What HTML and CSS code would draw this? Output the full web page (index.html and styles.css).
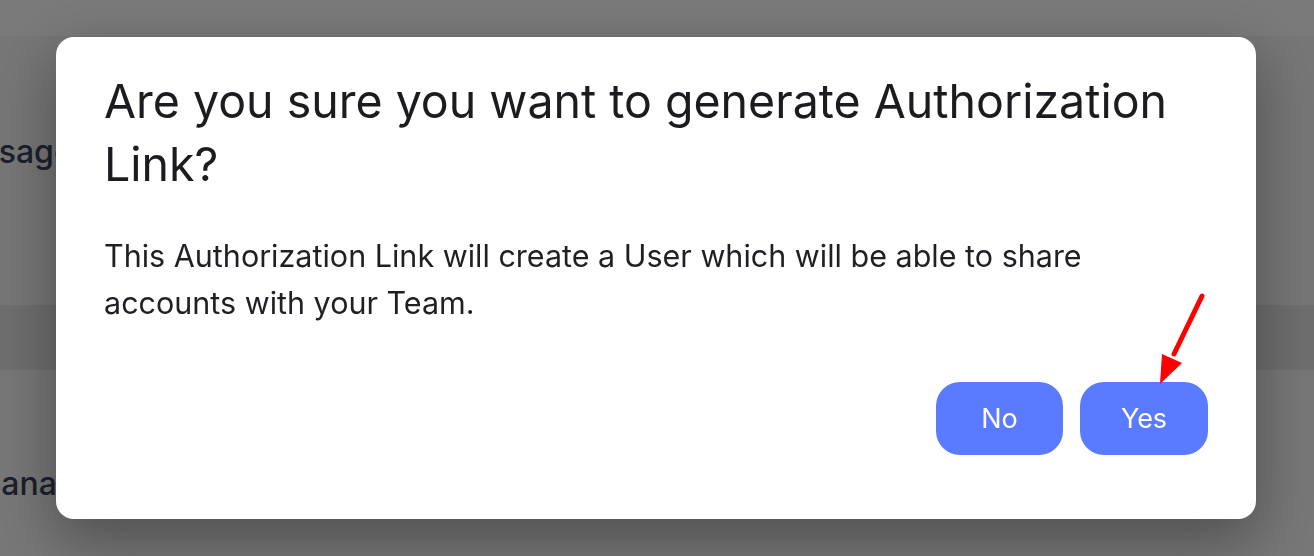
FILE: index.html
```html
<!DOCTYPE html>
<html lang="en">
<head>
<meta charset="utf-8">
<title>Generate Authorization Link</title>
<link rel="stylesheet" href="styles.css">
</head>
<body>
<div class="page">
  <div class="topbar"></div>
  <div class="section section-a">
    <div class="bg-label label-a">Usage</div>
  </div>
  <div class="band"></div>
  <div class="section section-b">
    <div class="bg-label label-b">Manage</div>
  </div>
</div>

<div class="overlay">
  <div class="modal" role="dialog" aria-modal="true">
    <h2 class="modal-title">Are you sure you want to generate Authorization Link?</h2>
    <p class="modal-text">This Authorization Link will create a User which will be able to share accounts with your Team.</p>
    <div class="modal-actions">
      <button class="btn">No</button>
      <button class="btn btn-yes">Yes
        <svg class="arrow" width="60" height="100" viewBox="0 0 60 100" aria-hidden="true">
          <line x1="52" y1="6" x2="24" y2="64" stroke="#ff0000" stroke-width="5" stroke-linecap="round"/>
          <polygon points="10,94 12,64 32,73" fill="#ff0000"/>
        </svg>
      </button>
    </div>
  </div>
</div>
</body>
</html>
```

FILE: styles.css
```css
* { box-sizing: border-box; }

html, body {
  margin: 0;
  padding: 0;
  height: 100%;
}

body {
  font-family: Inter, "Noto Sans", "Liberation Sans", sans-serif;
  background: #f0f0f0;
  overflow: hidden;
}

.page {
  display: flex;
  flex-direction: column;
  height: 556px;
}

.topbar {
  height: 36px;
  background: #f4f4f4;
}

.section {
  display: flex;
  flex-direction: column;
}

.section-a {
  height: 269px;
  background: #ececec;
  padding-top: 96px;
}

.band {
  height: 65px;
  background: #dcdcdc;
}

.section-b {
  flex: 1;
  background: #eeeeee;
  padding-top: 94px;
}

.bg-label {
  font-size: 32px;
  line-height: 40px;
  color: #38405a;
  font-weight: 500;
  white-space: nowrap;
}

.label-a { margin-left: -25px; }
.label-b { margin-left: -28px; }

.overlay {
  position: fixed;
  inset: 0;
  background: rgba(0, 0, 0, 0.5);
  display: flex;
  justify-content: center;
  align-items: flex-start;
  padding-top: 37px;
  padding-right: 2px;
}

.modal {
  width: 1200px;
  height: 482px;
  background: #ffffff;
  border-radius: 18px;
  box-shadow: 0 20px 60px rgba(0, 0, 0, 0.35);
  padding: 33px 48px 64px 48px;
  display: flex;
  flex-direction: column;
}

.modal-title {
  margin: 0;
  font-size: 46.5px;
  line-height: 63px;
  font-weight: 400;
  color: #1b1c1f;
  letter-spacing: 0;
}

.modal-text {
  margin: 36px 0 0 0;
  font-size: 30.5px;
  line-height: 47px;
  font-weight: 400;
  color: #1f2024;
  max-width: 1010px;
}

.modal-actions {
  margin-top: auto;
  display: flex;
  justify-content: flex-end;
  gap: 17px;
}

.btn {
  position: relative;
  width: 127px;
  height: 73px;
  border: none;
  border-radius: 24px;
  background: #5a7bff;
  color: #ffffff;
  font-family: inherit;
  font-size: 27px;
  font-weight: 400;
  padding: 0;
}

.btn-yes { width: 128px; }

.arrow {
  position: absolute;
  left: 70px;
  top: -92px;
  overflow: visible;
}
```
